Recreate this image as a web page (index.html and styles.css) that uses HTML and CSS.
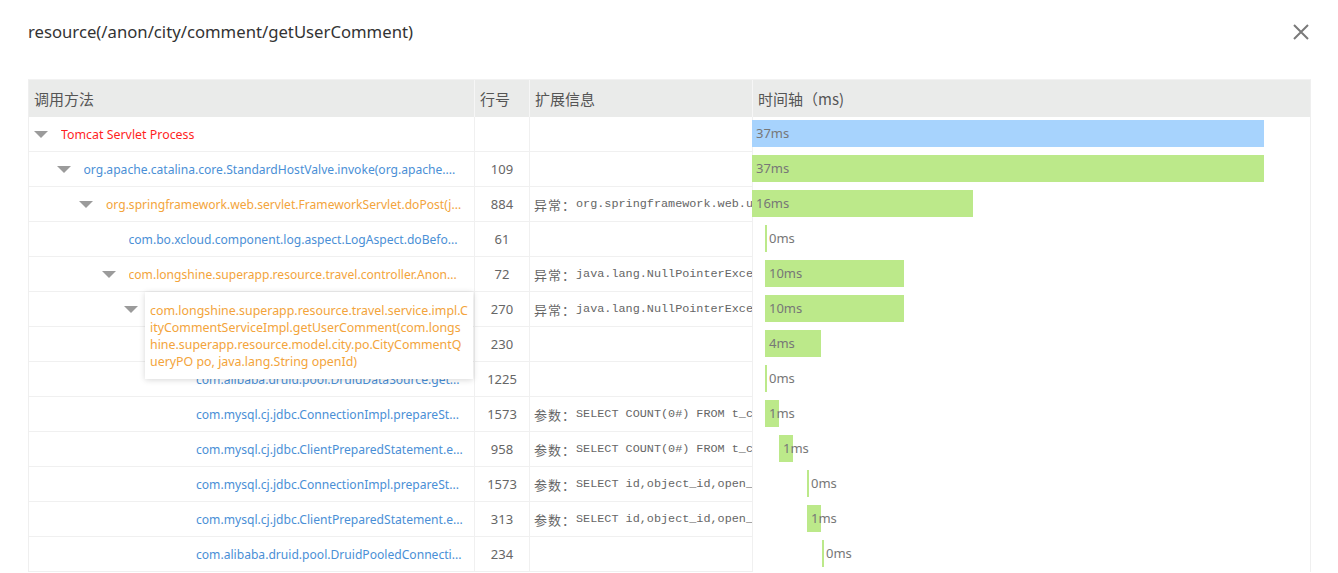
FILE: index.html
```html
<!DOCTYPE html>
<html lang="zh-CN">
<head>
<meta charset="utf-8">
<title>resource</title>
<link rel="stylesheet" href="styles.css">
</head>
<body>
<div class="dialog">
  <div class="head">
    <div class="title">resource(/anon/city/comment/getUserComment)</div>
    <button class="close" aria-label="close">
      <svg width="16" height="16" viewBox="0 0 16 16"><path d="M1 1L15 15M15 1L1 15" stroke="#7a7a7a" stroke-width="2" fill="none"/></svg>
    </button>
  </div>

  <div class="table">
    <div class="row hrow">
      <div class="th">调用方法</div>
      <div class="th">行号</div>
      <div class="th">扩展信息</div>
      <div class="th last">时间轴（ms)</div>
    </div>

    <div class="row">
      <div class="cell method lv0"><i class="caret"></i><span class="name red">Tomcat Servlet Process</span></div>
      <div class="cell num"></div>
      <div class="cell ext"></div>
      <div class="cell time"><div class="bar blue" style="margin-left:-1px;width:512px">37ms</div></div>
    </div>

    <div class="row">
      <div class="cell method lv1"><i class="caret"></i><span class="name link">org.apache.catalina.core.StandardHostValve.invoke(org.apache....</span></div>
      <div class="cell num">109</div>
      <div class="cell ext"></div>
      <div class="cell time"><div class="bar green" style="margin-left:-1px;width:512px">37ms</div></div>
    </div>

    <div class="row">
      <div class="cell method lv2"><i class="caret"></i><span class="name warn">org.springframework.web.servlet.FrameworkServlet.doPost(j...</span></div>
      <div class="cell num">884</div>
      <div class="cell ext"><span class="k">异常：</span><span class="v">org.springframework.web.u</span></div>
      <div class="cell time"><div class="bar green" style="margin-left:-1px;width:221px">16ms</div></div>
    </div>

    <div class="row">
      <div class="cell method lv3"><i class="caret none"></i><span class="name link">com.bo.xcloud.component.log.aspect.LogAspect.doBefo...</span></div>
      <div class="cell num">61</div>
      <div class="cell ext"></div>
      <div class="cell time"><div class="bar green" style="margin-left:12px;width:2px">0ms</div></div>
    </div>

    <div class="row">
      <div class="cell method lv3"><i class="caret"></i><span class="name warn">com.longshine.superapp.resource.travel.controller.Anon...</span></div>
      <div class="cell num">72</div>
      <div class="cell ext"><span class="k">异常：</span><span class="v">java.lang.NullPointerExce</span></div>
      <div class="cell time"><div class="bar green" style="margin-left:12px;width:139px">10ms</div></div>
    </div>

    <div class="row">
      <div class="cell method lv4"><i class="caret"></i>
        <div class="tip">com.longshine.superapp.resource.travel.service.impl.C<br>ityCommentServiceImpl.getUserComment(com.longs<br>hine.superapp.resource.model.city.po.CityCommentQ<br>ueryPO po, java.lang.String openId)</div>
      </div>
      <div class="cell num">270</div>
      <div class="cell ext"><span class="k">异常：</span><span class="v">java.lang.NullPointerExce</span></div>
      <div class="cell time"><div class="bar green" style="margin-left:12px;width:139px">10ms</div></div>
    </div>

    <div class="row">
      <div class="cell method lv5"><i class="caret"></i></div>
      <div class="cell num">230</div>
      <div class="cell ext"></div>
      <div class="cell time"><div class="bar green" style="margin-left:12px;width:56px">4ms</div></div>
    </div>

    <div class="row">
      <div class="cell method lv6"><i class="caret none"></i><span class="name link">com.alibaba.druid.pool.DruidDataSource.get...</span></div>
      <div class="cell num">1225</div>
      <div class="cell ext"></div>
      <div class="cell time"><div class="bar green" style="margin-left:12px;width:2px">0ms</div></div>
    </div>

    <div class="row">
      <div class="cell method lv6"><i class="caret none"></i><span class="name link">com.mysql.cj.jdbc.ConnectionImpl.prepareSt...</span></div>
      <div class="cell num">1573</div>
      <div class="cell ext"><span class="k">参数：</span><span class="v">SELECT COUNT(0#) FROM t_c</span></div>
      <div class="cell time"><div class="bar green" style="margin-left:12px;width:14px">1ms</div></div>
    </div>

    <div class="row">
      <div class="cell method lv6"><i class="caret none"></i><span class="name link">com.mysql.cj.jdbc.ClientPreparedStatement.e...</span></div>
      <div class="cell num">958</div>
      <div class="cell ext"><span class="k">参数：</span><span class="v">SELECT COUNT(0#) FROM t_c</span></div>
      <div class="cell time"><div class="bar green" style="margin-left:26px;width:14px">1ms</div></div>
    </div>

    <div class="row">
      <div class="cell method lv6"><i class="caret none"></i><span class="name link">com.mysql.cj.jdbc.ConnectionImpl.prepareSt...</span></div>
      <div class="cell num">1573</div>
      <div class="cell ext"><span class="k">参数：</span><span class="v">SELECT id,object_id,open_</span></div>
      <div class="cell time"><div class="bar green" style="margin-left:54px;width:2px">0ms</div></div>
    </div>

    <div class="row">
      <div class="cell method lv6"><i class="caret none"></i><span class="name link">com.mysql.cj.jdbc.ClientPreparedStatement.e...</span></div>
      <div class="cell num">313</div>
      <div class="cell ext"><span class="k">参数：</span><span class="v">SELECT id,object_id,open_</span></div>
      <div class="cell time"><div class="bar green" style="margin-left:54px;width:14px">1ms</div></div>
    </div>

    <div class="row">
      <div class="cell method lv6"><i class="caret none"></i><span class="name link">com.alibaba.druid.pool.DruidPooledConnecti...</span></div>
      <div class="cell num">234</div>
      <div class="cell ext"></div>
      <div class="cell time"><div class="bar green" style="margin-left:69px;width:2px">0ms</div></div>
    </div>
  </div>
</div>
</body>
</html>
```

FILE: styles.css
```css
* { box-sizing: border-box; }

html, body {
  margin: 0;
  padding: 0;
  background: #ffffff;
}

body {
  font-family: "Noto Sans", "Noto Sans CJK SC", sans-serif;
  color: #333;
  overflow: hidden;
}

.dialog {
  padding: 20px 28px 0 28px;
}

.head {
  display: flex;
  align-items: center;
  justify-content: space-between;
  height: 24px;
  margin-bottom: 35px;
}

.title {
  font-size: 16.7px;
  line-height: 24px;
  color: #333;
}

.close {
  border: 0;
  background: transparent;
  padding: 0;
  width: 16px;
  height: 16px;
  display: flex;
  margin-right: 1px;
}

.table {
  width: 1283px;
  border-left: 1px solid #efefef;
  border-right: 1px solid #efefef;
  border-top: 1px solid #f2f2f2;
}

.row {
  display: grid;
  grid-template-columns: 446px 55px 223px 557px;
  height: 35px;
}

.hrow {
  height: 37px;
  background: #eaebea;
}

.th {
  font-family: "Noto Sans CJK SC", sans-serif;
  font-size: 15px;
  color: #555;
  display: flex;
  align-items: center;
  padding-left: 5px;
  border-right: 1px solid #f6f6f6;
}

.th.last { border-right: 0; }

.cell {
  display: flex;
  align-items: center;
  border-right: 1px solid #f0f0f0;
  border-bottom: 1px solid #f0f0f0;
  min-width: 0;
}

.cell.time {
  border-right: 0;
  border-bottom: 0;
  align-items: flex-start;
}

.method {
  position: relative;
  padding-right: 6px;
}

.lv0 { padding-left: 5px; }
.lv1 { padding-left: 27.5px; }
.lv2 { padding-left: 50px; }
.lv3 { padding-left: 72.5px; }
.lv4 { padding-left: 95px; }
.lv5 { padding-left: 117.5px; }
.lv6 { padding-left: 140px; }

.caret {
  flex-shrink: 0;
  width: 0;
  height: 0;
  border-left: 7px solid transparent;
  border-right: 7px solid transparent;
  border-top: 7px solid #9b9b9b;
  margin-right: 13px;
  margin-top: 1px;
}

.caret.none { border-top-color: transparent; }

.name {
  flex: 1;
  min-width: 0;
  white-space: nowrap;
  overflow: hidden;
  text-overflow: ellipsis;
  font-size: 12.1px;
}

.name.red { font-size: 12.4px; }

.red { color: #ff1f1f; }
.link { color: #4a8fd6; }
.warn { color: #f3a43b; }

.num {
  justify-content: center;
  font-size: 13px;
  color: #666;
}

.ext {
  padding-left: 4px;
  white-space: nowrap;
  overflow: hidden;
  color: #666;
}

.ext .k {
  font-family: "Noto Sans CJK SC", sans-serif;
  font-size: 13px;
  letter-spacing: 1px;
  flex-shrink: 0;
}

.ext .v {
  font-family: "Liberation Mono", monospace;
  font-size: 11.8px;
  flex-shrink: 0;
}

.bar {
  margin-top: 3px;
  height: 27px;
  line-height: 27px;
  text-indent: 4px;
  white-space: nowrap;
  font-size: 13px;
  color: #777;
  flex-shrink: 0;
}

.bar.blue { background: #a7d3fd; }
.bar.green { background: #bce98a; }

.tip {
  position: absolute;
  left: 116px;
  top: 0;
  width: 328px;
  padding: 10px 6px 9px 5px;
  background: #fff;
  box-shadow: 0 1px 6px rgba(0, 0, 0, 0.16);
  color: #f3a43b;
  font-size: 12.4px;
  line-height: 17px;
  white-space: nowrap;
  overflow: hidden;
  z-index: 5;
}
```
